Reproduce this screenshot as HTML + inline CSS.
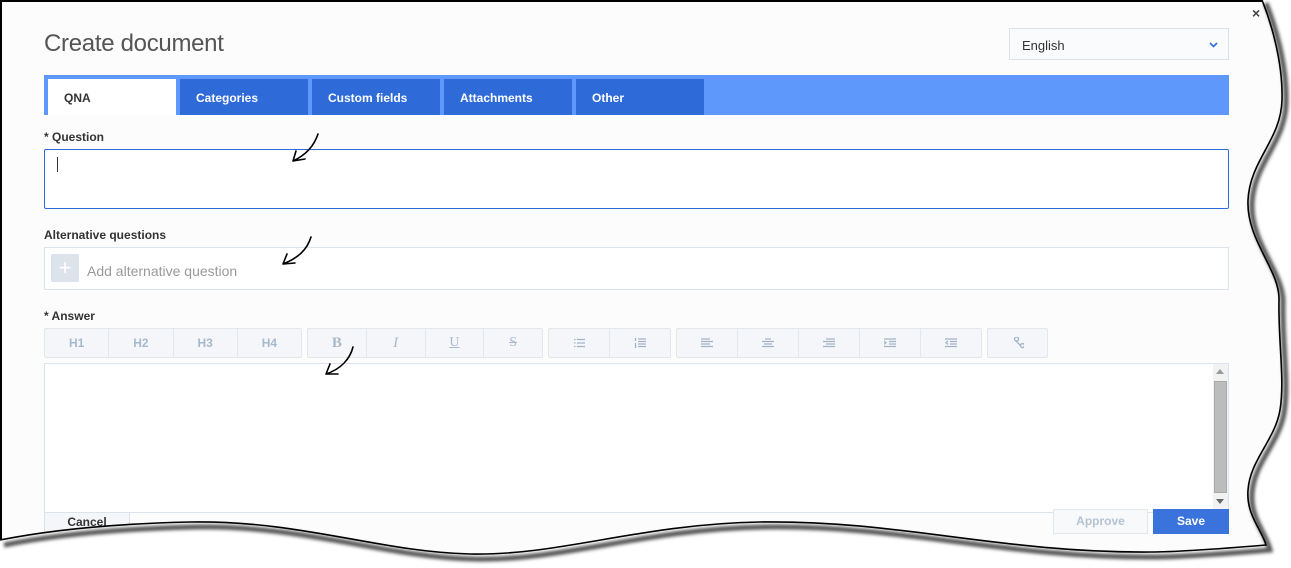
<!DOCTYPE html>
<html><head><meta charset="utf-8"><style>
*{box-sizing:border-box;margin:0;padding:0}
body{width:1291px;height:568px;overflow:hidden;background:#fff;font-family:"Liberation Sans",sans-serif;position:relative}
.pg{position:absolute;left:0;top:0;width:1291px;height:568px;background:#fcfcfd}
.abs{position:absolute}
.title{left:44px;top:30px;font-size:24px;color:#555;letter-spacing:-0.3px}
.sel{left:1009px;top:28px;width:220px;height:32px;border:1px solid #dde2e8;background:#fafbfc;font-size:13px;color:#333;padding:9px 12px}
.tabbar{left:44px;top:75px;width:1185px;height:40px;background:#5f98fb}
.tab{position:absolute;top:4px;height:36px;width:128px;background:#2f6ad9;color:#fff;font-size:12px;font-weight:bold;padding:12px 16px}
.lbl{font-size:12px;font-weight:bold;color:#333}
.tb{position:absolute;top:328px;height:30px;border:1px solid #e2e7ec;background:#f4f6f9;border-radius:2px;display:flex}
.tb div{flex:1;border-left:1px solid #e2e7ec;text-align:center;line-height:28px;font-size:12px;font-weight:bold;color:#a9b9cc;display:flex;align-items:center;justify-content:center}
.tb div:first-child{border-left:none}
.tb svg path{stroke:#a3b3c7;stroke-width:1.3;fill:none}
</style></head><body>
<div class="pg">
<div class="abs title">Create document</div>
<div class="abs sel">English<svg class="abs" style="left:199px;top:13px" width="9" height="6"><path d="M1 1l3.5 3.5L8 1" stroke="#2f6ad9" stroke-width="1.6" fill="none"/></svg></div>
<div class="abs tabbar">
<div class="tab" style="left:4px;background:#fff;color:#333">QNA</div>
<div class="tab" style="left:136px">Categories</div>
<div class="tab" style="left:268px">Custom fields</div>
<div class="tab" style="left:400px">Attachments</div>
<div class="tab" style="left:532px">Other</div>
</div>
<div class="abs lbl" style="left:44px;top:130px">* Question</div>
<div class="abs" style="left:44px;top:149px;width:1185px;height:60px;border:1px solid #2f6ad9;border-radius:2px;background:#fff"></div>
<div class="abs" style="left:57px;top:157px;width:1px;height:15px;background:#333"></div>
<div class="abs lbl" style="left:44px;top:228px">Alternative questions</div>
<div class="abs" style="left:44px;top:247px;width:1185px;height:43px;border:1px solid #dde3ea;background:#fff"></div>
<div class="abs" style="left:51px;top:254px;width:28px;height:28px;background:#dde3ea;border-radius:2px;color:#fff;font-size:22px;text-align:center;line-height:27px">+</div>
<div class="abs" style="left:87px;top:263px;font-size:14px;color:#9a9a9a">Add alternative question</div>
<div class="abs lbl" style="left:44px;top:309px">* Answer</div>
<div class="tb" style="left:44px;width:258px"><div>H1</div><div>H2</div><div>H3</div><div>H4</div></div>
<div class="tb" style="left:307px;width:236px"><div style="font-family:'Liberation Serif',serif;font-size:15px">B</div><div style="font-family:'Liberation Serif',serif;font-style:italic;font-size:15px;font-weight:normal">I</div><div style="font-family:'Liberation Serif',serif;text-decoration:underline;font-size:14px;font-weight:normal">U</div><div style="font-family:'Liberation Serif',serif;text-decoration:line-through;font-size:14px;font-weight:normal">S</div></div>
<div class="tb" style="left:548px;width:123px">
<div><svg width="12" height="10"><path d="M1 1.5h1.5M1 5h1.5M1 8.5h1.5M4 1.5h8M4 5h8M4 8.5h8"/></svg></div>
<div><svg width="12" height="12"><path d="M1.5 1v3M1.5 6v5M4 2h8M4 4.5h8M4 7h8M4 9.5h8"/></svg></div></div>
<div class="tb" style="left:676px;width:306px">
<div><svg width="12" height="10"><path d="M0 1h9M0 3.5h12M0 6h9M0 8.5h12"/></svg></div>
<div><svg width="12" height="10"><path d="M3 1h6M0 3.5h12M2 6h8M0 8.5h12"/></svg></div>
<div><svg width="12" height="10"><path d="M3 1h9M0 3.5h12M3 6h9M0 8.5h12"/></svg></div>
<div><svg width="12" height="10"><path d="M0 1h12M5 3.5h7M5 6h7M0 8.5h12M0 3l2 1.7-2 1.7"/></svg></div>
<div><svg width="12" height="10"><path d="M0 1h12M5 3.5h7M5 6h7M0 8.5h12M3 3L1 4.7l2 1.7"/></svg></div>
</div>
<div class="tb" style="left:987px;width:61px"><div><svg width="12" height="12"><path d="M2 1.5a2 2 0 1 1 0 .1zM8 8a2 2 0 1 1 0 .1zM3.5 3.5l4 4" transform="translate(0.5,0.5)"/></svg></div></div>
<div class="abs" style="left:44px;top:363px;width:1185px;height:150px;border:1px solid #dde3ea;background:#fff"></div>
<div class="abs" style="left:1213px;top:364px;width:15px;height:148px;background:#f2f2f2"></div>
<div class="abs" style="left:1214px;top:381px;width:13px;height:112px;background:#bcbcbc;border:1px solid #aaa"></div>
<div class="abs" style="left:1216px;top:369px;width:0;height:0;border:4px solid transparent;border-bottom:5px solid #999;border-top:none"></div>
<div class="abs" style="left:1216px;top:499px;width:0;height:0;border:4px solid transparent;border-top:5px solid #666;border-bottom:none"></div>
<div class="abs" style="left:44px;top:512px;width:86px;height:24px;border:1px solid #dde3ea;background:#f4f6f9;font-size:12px;font-weight:bold;color:#333;text-align:center;line-height:18px">Cancel</div>
<div class="abs" style="left:1053px;top:509px;width:95px;height:25px;border:1px solid #e2e7ec;background:#f7f9fb;font-size:12px;font-weight:bold;color:#b5c2d2;text-align:center;line-height:23px">Approve</div>
<div class="abs" style="left:1153px;top:509px;width:76px;height:25px;background:#3a73db;font-size:12px;font-weight:bold;color:#fff;text-align:center;line-height:24px">Save</div>
<div class="abs" style="left:1252px;top:5px;font-size:14px;font-weight:bold;color:#444">×</div>
</div>
<svg class="abs" style="left:0;top:0" width="1291" height="568">
<defs><filter id="b"><feGaussianBlur stdDeviation="1.5"/></filter></defs>
<g fill="none" stroke="#000" stroke-width="1.6" stroke-linecap="round">
<path d="M318 134C314 146 306 155 293 161M293 161l12-2M293 161l3-10"/>
<path d="M311 237C307 250 298 258 283 264M283 264l12-1M283 264l4-10"/>
<path d="M353 347C350 359 341 369 326 374M326 374l12 0M326 374l4-10"/>
</g>
<path d="M1262 0C1270 20 1283 60 1282 100C1281 140 1250 160 1248 200C1246 240 1280 270 1279 300C1278 340 1285 380 1280 410C1275 440 1250 460 1248 490C1246 515 1262 530 1266 545C1230 548 1180 552 1150 552C1000 553 900 520 760 522C640 524 560 556 470 554C380 552 300 520 190 522C100 524 40 532 0 540 L0 568 L1291 568 L1291 0Z" fill="#fff"/>
<path d="M1264 0C1272 20 1285 60 1284 100C1283 140 1252 160 1250 200C1248 240 1282 270 1281 300C1280 340 1287 380 1282 410C1277 440 1252 460 1250 490C1248 515 1264 530 1268 547C1232 550 1182 554 1152 554C1002 555 902 522 762 524C642 526 562 558 472 556C382 554 302 522 192 524C102 526 42 534 2 542" fill="none" stroke="#555" stroke-width="5" filter="url(#b)" transform="translate(2,3)"/>
<path d="M1262 0C1270 20 1283 60 1282 100C1281 140 1250 160 1248 200C1246 240 1280 270 1279 300C1278 340 1285 380 1280 410C1275 440 1250 460 1248 490C1246 515 1262 530 1266 545C1230 548 1180 552 1150 552C1000 553 900 520 760 522C640 524 560 556 470 554C380 552 300 520 190 522C100 524 40 532 0 540" fill="none" stroke="#000" stroke-width="1.6"/>
<path d="M1 540V1H1262" fill="none" stroke="#000" stroke-width="2"/>
</svg>
</body></html>
